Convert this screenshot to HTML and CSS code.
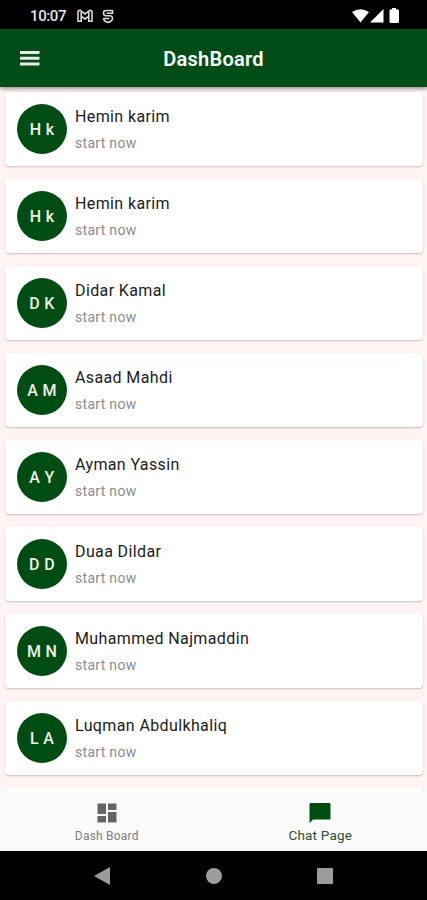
FILE: index.html
```
<!DOCTYPE html>
<html lang="en">
<head>
  <meta charset="UTF-8">
  <meta name="viewport" content="width=device-width, initial-scale=1.0">
  <title>DashBoard</title>
  <link rel="stylesheet" href="styles.css">
</head>
<body>
  <div class="status-bar">
    <span class="clock">10:07</span>
    <svg class="mail-icon" width="16" height="14" viewBox="0 0 16 14" fill="none" stroke="#d8d8d8" stroke-width="1.6">
      <path d="M1 2.2 L3 1.2 L8 5 L13 1.2 L15 2.2 V12.3 H11.8 V7.3 L8 10 L4.2 7.3 V12.3 H1 Z M4.2 7.3 V3 M11.8 7.3 V3"/>
    </svg>
    <svg class="shield-icon" width="12" height="15" viewBox="0 0 12 15" fill="none" stroke="#d8d8d8" stroke-width="1.6">
      <path d="M10.500 5 V1.500 H4 Q1.500 1.500 1.500 4 Q1.500 6.800 4 6.800 H8 Q10.500 6.800 10.500 9.500 Q10.500 12 6 13.600 Q1.500 12 1.500 9.300 M4.500 4.200 H10.500 M1.500 9.500 H7.500"/>
    </svg>
    <div class="status-right">
      <svg width="48" height="16" viewBox="0 0 48 16" fill="#fff">
        <path d="M0 4 Q8.500 -1.500 17 4 L8.500 14.500 Z"/>
        <path d="M31.500 1 V14.500 H18 Z"/>
        <path d="M40 1.300 V0 H44 V1.300 H45.500 Q47 1.300 47 2.800 V13.500 Q47 15 45.500 15 H39 Q37.500 15 37.500 13.500 V2.800 Q37.500 1.300 39 1.300 Z"/>
      </svg>
    </div>
  </div>

  <header class="app-bar">
    <svg class="menu-icon" width="20" height="15" viewBox="0 0 20 15" fill="#e8ece8">
      <path d="M0 0 H19.500 V3 H0 Z M0 5.700 H19.500 V8.700 H0 Z M0 11.400 H19.500 V14.400 H0 Z"/>
    </svg>
    <h1>DashBoard</h1>
  </header>

  <main class="chat-list">
    <div class="card">
      <div class="avatar">H k</div>
      <div class="info"><div class="name">Hemin karim</div><div class="message">start now</div></div>
    </div>
    <div class="card">
      <div class="avatar">H k</div>
      <div class="info"><div class="name">Hemin karim</div><div class="message">start now</div></div>
    </div>
    <div class="card">
      <div class="avatar">D K</div>
      <div class="info"><div class="name">Didar Kamal</div><div class="message">start now</div></div>
    </div>
    <div class="card">
      <div class="avatar">A M</div>
      <div class="info"><div class="name">Asaad Mahdi</div><div class="message">start now</div></div>
    </div>
    <div class="card">
      <div class="avatar">A Y</div>
      <div class="info"><div class="name">Ayman Yassin</div><div class="message">start now</div></div>
    </div>
    <div class="card">
      <div class="avatar">D D</div>
      <div class="info"><div class="name">Duaa Dildar</div><div class="message">start now</div></div>
    </div>
    <div class="card">
      <div class="avatar">M N</div>
      <div class="info"><div class="name">Muhammed Najmaddin</div><div class="message">start now</div></div>
    </div>
    <div class="card">
      <div class="avatar">L A</div>
      <div class="info"><div class="name">Luqman Abdulkhaliq</div><div class="message">start now</div></div>
    </div>
    <div class="card"></div>
  </main>

  <nav class="bottom-nav">
    <div class="tab">
      <svg width="20" height="20" viewBox="0 0 20 20" fill="#666">
        <path d="M0.500 0.500 H9 V11 H0.500 Z M11 0.500 H19.500 V7 H11 Z M0.500 13 H9 V19.500 H0.500 Z M11 9 H19.500 V19.500 H11 Z"/>
      </svg>
      <span>Dash Board</span>
    </div>
    <div class="tab active">
      <svg width="22" height="20" viewBox="0 0 22 20" fill="#004d14">
        <path d="M1.500 0 H20.500 Q21.500 0 21.500 1 V15.500 Q21.500 16.500 20.500 16.500 H4 L0.500 20 V1 Q0.500 0 1.500 0 Z"/>
      </svg>
      <span>Chat Page</span>
    </div>
  </nav>

  <div class="system-nav">
    <svg width="16" height="18" viewBox="0 0 16 18" fill="#9c9c9c"><path d="M16 0 V18 L0 9 Z"/></svg>
    <div class="home"></div>
    <div class="recent"></div>
  </div>
</body>
</html>
```

FILE: styles.css
```
* {
  box-sizing: border-box;
}

body {
  margin: 0;
  height: 900px;
  display: flex;
  flex-direction: column;
  overflow: hidden;
  font-family: Roboto, "Liberation Sans", sans-serif;
  background-color: #fff3f3;
}

.status-bar {
  flex: none;
  height: 29px;
  display: flex;
  align-items: center;
  padding: 3px 27px 0 30px;
  background-color: #000;
  color: #e4e4e4;
}

.clock {
  width: 47px;
  font-size: 15px;
  font-weight: 500;
  letter-spacing: -0.4px;
}

.shield-icon {
  margin-left: 9px;
}

.status-right {
  display: flex;
  margin-left: auto;
  padding-bottom: 1px;
}

/* top bar */
.app-bar {
  flex: none;
  height: 58px;
  display: grid;
  grid-template-columns: 60px 1fr 60px;
  align-items: center;
  padding-top: 1px;
  background-color: #004d18;
  box-shadow: 0 2px 4px rgba(0, 0, 0, 0.4);
  z-index: 1;
}

.menu-icon {
  margin-left: 20px;
}

h1 {
  margin: 0;
  padding-top: 1px;
  color: #fff;
  font-size: 20px;
  font-weight: 600;
  line-height: 24px;
  letter-spacing: 0.25px;
  text-align: center;
}

/* list of chats */
.chat-list {
  flex: 1;
  min-height: 0;
  overflow: hidden;
  display: flex;
  flex-direction: column;
  gap: 13px;
  padding: 5px 4px 0 5px;
}

.card {
  flex: none;
  height: 74px;
  display: flex;
  align-items: center;
  gap: 8px;
  padding-left: 12px;
  background-color: #fff;
  border-radius: 4px;
  box-shadow: 0 1px 2px rgba(0, 0, 0, 0.22);
}

.avatar {
  width: 50px;
  height: 50px;
  border-radius: 50%;
  background-color: #004d14;
  color: #f0f0e8;
  font-size: 16px;
  font-weight: 500;
  letter-spacing: 0.3px;
  line-height: 51px;
  text-align: center;
}

.name {
  padding-top: 1px;
  color: #1c1c1c;
  font-size: 16px;
  line-height: 20px;
  letter-spacing: 0.38px;
}

.message {
  margin-top: 6px;
  color: #8c8c8c;
  font-size: 14px;
  line-height: 20px;
  letter-spacing: 0.3px;
}

/* bottom tabs */
.bottom-nav {
  flex: none;
  height: 59px;
  display: flex;
  background-color: #fafafa;
}

.tab {
  flex: 1;
  display: flex;
  flex-direction: column;
  align-items: center;
  padding-top: 11px;
  color: #808080;
  font-size: 12px;
  line-height: 16px;
  letter-spacing: 0.2px;
}

.tab span {
  margin-top: 5px;
}

.active {
  color: #2d5038;
  font-size: 13.500px;
}

.active span {
  margin-top: 4px;
}

.system-nav {
  flex: none;
  height: 49px;
  display: flex;
  align-items: center;
  justify-content: space-between;
  padding: 0 94px;
  background-color: #000;
}

.home {
  width: 16px;
  height: 16px;
  border-radius: 50%;
  background-color: #9c9c9c;
}

.recent {
  width: 16px;
  height: 16px;
  border-radius: 1px;
  background-color: #9c9c9c;
}
```
